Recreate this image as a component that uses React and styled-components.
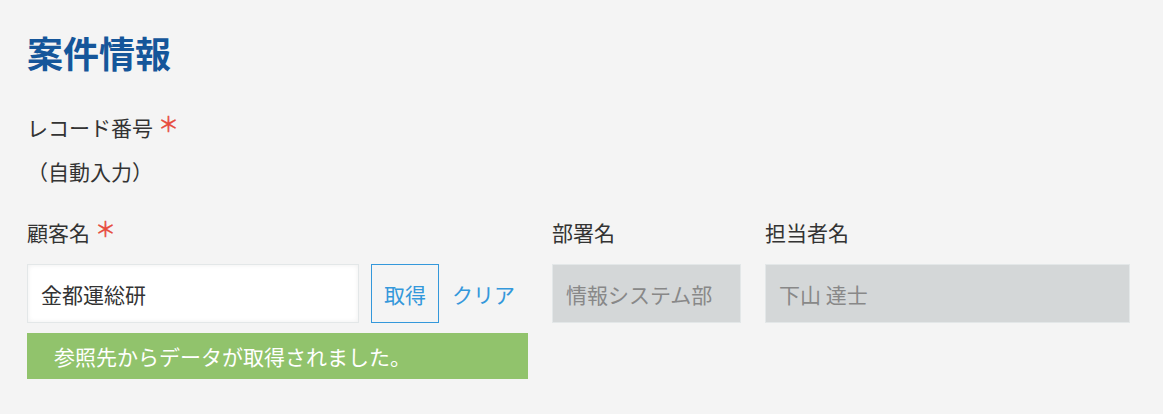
import React from 'react';
import styled, { createGlobalStyle } from 'styled-components';

const GlobalStyle = createGlobalStyle`
  body {
    margin: 0;
    background: #f4f4f4;
    font-family: "Noto Sans CJK JP", "Noto Sans", sans-serif;
    color: #333;
  }
`;

const Page = styled.div`
  padding: 32px 0 0 27px;
  height: 414px;
  box-sizing: border-box;
`;

const Title = styled.h1`
  margin: 0;
  font-size: 36px;
  line-height: 41px;
  font-weight: 700;
  color: #15569a;
`;

const Field = styled.div`
  display: flex;
  flex-direction: column;
  width: ${props => props.width ? `${props.width}px` : 'auto'};
`;

const Label = styled.div`
  font-size: 21px;
  line-height: 30px;
  color: #333;
  margin-bottom: ${props => props.gap}px;
`;

const Required = styled.span`
  display: inline-block;
  color: #e74c3c;
  margin-left: 5px;
  font-size: 21px;
  line-height: 22px;
  vertical-align: top;
  -webkit-text-stroke: 0.4px #e74c3c;
`;

const Value = styled.div`
  font-size: 21px;
  line-height: 30px;
  color: #333;
`;

const RecordBlock = styled.div`
  margin-top: 39px;
`;

const FieldRow = styled.div`
  display: flex;
  gap: 24px;
  margin-top: 31px;
`;

const Controls = styled.div`
  display: flex;
  align-items: center;
`;

const TextInput = styled.div`
  box-sizing: border-box;
  width: 332px;
  height: 59px;
  padding: 0 13px;
  display: flex;
  align-items: center;
  background: #fff;
  border: 1px solid #e3e7e8;
  box-shadow: inset 0 0 5px rgba(0, 0, 0, 0.07);
  font-size: 21px;
  color: #333;
`;

const LookupButton = styled.button`
  box-sizing: border-box;
  margin-left: 12px;
  width: 68px;
  height: 59px;
  padding: 0;
  background: transparent;
  border: 1px solid #3498db;
  color: #3498db;
  font-family: inherit;
  font-size: 21px;
  cursor: pointer;
`;

const ClearLink = styled.a`
  margin-left: 13px;
  color: #3498db;
  font-size: 21px;
  cursor: pointer;
`;

const Notice = styled.div`
  margin-top: 10px;
  height: 46px;
  padding-left: 27px;
  display: flex;
  align-items: center;
  background: #91c36c;
  color: #fff;
  font-size: 21px;
`;

const DisabledInput = styled.div`
  box-sizing: border-box;
  height: 59px;
  padding: 0 13px;
  display: flex;
  align-items: center;
  background: #d4d7d8;
  border: 1px solid #e3e7e8;
  color: #888;
  font-size: 21px;
  white-space: nowrap;
  overflow: hidden;
`;

export default function App() {
  return (
    <>
      <GlobalStyle />
      <Page>
        <Title>案件情報</Title>

        <RecordBlock>
          <Label gap={14}>
            レコード番号<Required>＊</Required>
          </Label>
          <Value>（自動入力）</Value>
        </RecordBlock>

        <FieldRow>
          <Field width={501}>
            <Label gap={17}>
              顧客名<Required>＊</Required>
            </Label>
            <Controls>
              <TextInput>金都運総研</TextInput>
              <LookupButton>取得</LookupButton>
              <ClearLink>クリア</ClearLink>
            </Controls>
            <Notice>参照先からデータが取得されました。</Notice>
          </Field>
          <Field width={189}>
            <Label gap={17}>部署名</Label>
            <DisabledInput>情報システム部</DisabledInput>
          </Field>
          <Field width={365}>
            <Label gap={17}>担当者名</Label>
            <DisabledInput>下山 達士</DisabledInput>
          </Field>
        </FieldRow>
      </Page>
    </>
  );
}
